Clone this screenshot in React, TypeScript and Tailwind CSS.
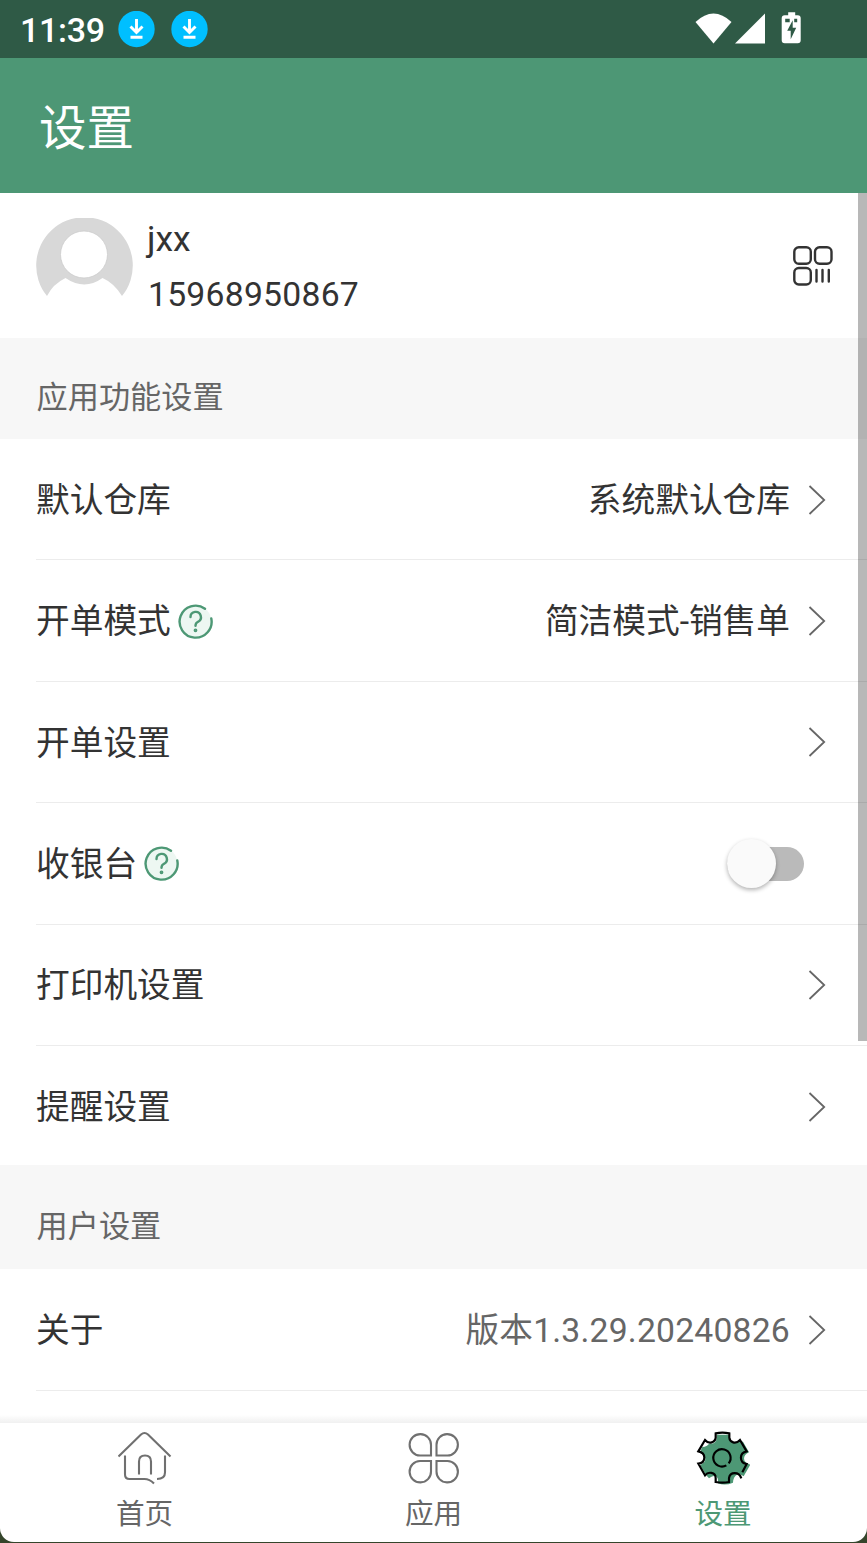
import type { ReactNode } from "react";

const settings = [
  { id: "warehouse", label: "默认仓库", value: "系统默认仓库" },
  { id: "mode", label: "开单模式", value: "简洁模式-销售单", help: true },
  { id: "billing", label: "开单设置" },
  { id: "cashier", label: "收银台", help: true, toggle: true },
  { id: "printer", label: "打印机设置" },
  { id: "reminder", label: "提醒设置" },
];

const DownloadBadge = () => (
  <svg width="37" height="37" viewBox="0 0 37 37" fill="none">
    <circle cx="18.5" cy="18" r="18.2" fill="#00bfff" />
    <path d="M18.5 8v13M12.5 15.5l6 6 6-6M12.5 26.3h12" stroke="white" strokeWidth="2.9" />
  </svg>
);

const StatusBar = () => (
  <div className="flex h-[58px] shrink-0 items-center bg-[#2f5a46] pl-5 text-white">
    <span className="w-[98px] pt-0.5 text-[34px] leading-none font-medium tracking-[-0.3px]">
      11:39
    </span>
    <div className="flex gap-4">
      <DownloadBadge />
      <DownloadBadge />
    </div>
    <svg className="mr-16 ml-auto" width="108" height="36" viewBox="0 0 108 36" fill="white">
      <path d="M0.500 11Q18.500-6 36.500 11L18.500 32.500Z" />
      <path d="M70 2.500v30H40Z" />
      <path
        fillRule="evenodd"
        d="M92.500 1h7v3h2.500q3 0 3 3v22q0 3-3 3H89q-3 0-3-3V7q0-3 3-3h3.500ZM89.500 7.500v3.500h4.500v-3.500ZM98.500 7.500v3.500h3v-3.500ZM97 9L91.500 19.500h3.500v8.500l5.500-11.500h-3.500Z"
        transform="translate(0.700 0.300)"
      />
    </svg>
  </div>
);

const Avatar = () => (
  <svg className="mt-px shrink-0" width="97" height="97" viewBox="0 0 97 97">
    <path
      d="M11 78A48.300 48.300 0 1 1 86 78Q78 65 66.500 60Q48.500 73 29.500 60Q17 66 11 78Z"
      fill="#d8d8d8"
    />
    <circle cx="48" cy="36.500" r="23.500" fill="white" stroke="#cccccc" strokeWidth="0.800" />
  </svg>
);

const QrIcon = () => (
  <svg width="40" height="40" viewBox="0 0 40 40" fill="none" stroke="#333333" strokeWidth="2.400">
    <rect x="1.300" y="1.300" width="16.500" height="16.500" rx="4.500" />
    <rect x="22" y="1.300" width="16.500" height="16.500" rx="4.500" />
    <rect x="1.300" y="22" width="16.500" height="16.500" rx="4.500" />
    <path d="M23.500 24v11.500M29.500 24v11.500M35.800 24v11.500" strokeLinecap="round" />
  </svg>
);

const HelpIcon = () => (
  <svg
    className="ml-[7px]"
    width="35"
    height="35"
    viewBox="0 0 35 35"
    fill="none"
    stroke="#4d9875"
    strokeWidth="2.400"
    strokeLinecap="round"
  >
    <circle cx="17.500" cy="17.500" r="16" fill="#edf7f2" stroke="none" />
    <path d="M27 4.700A16 16 0 1 0 33.300 14.500" />
    <path d="M12.500 13a5.200 5.200 0 1 1 7.400 4.800q-2.400 1.200-2.400 4" />
    <circle cx="17.500" cy="26.300" r="0.700" fill="#4d9875" />
  </svg>
);

const Chevron = () => (
  <svg className="ml-[18px]" width="18" height="32" viewBox="0 0 18 32" fill="none">
    <path d="M1.500 2L16.200 16L1.500 30" stroke="#666666" strokeWidth="1.800" />
  </svg>
);

const Toggle = () => (
  <div className="mr-[22px] flex h-[34px] w-[77px] items-center rounded-full bg-[#bababa]">
    <div className="h-[49px] w-[49px] shrink-0 rounded-full bg-[#fafafa] shadow-[0_2px_4px_rgba(0,0,0,0.3)]" />
  </div>
);

const SectionTitle = ({ children }: { children: ReactNode }) => (
  <div className="flex h-full items-center bg-[#f7f7f7] pt-5 pl-[36.500px] text-[31.200px] text-[#666666]">
    {children}
  </div>
);

const HomeIcon = () => (
  <svg width="54" height="54" viewBox="0 0 54 54" fill="none" stroke="#707070" strokeWidth="2.100">
    <path d="M0.500 25.500L23 3.500q3.500-3 7 0l22.500 22" />
    <path d="M7 24.500v19q0 4.500 4.500 4.500h15q5 0 9.500 4.500M47 24.500v17q0 6.500-8 6.500" />
    <path d="M21 43.500V30.500q0-6 6-6t6 6v13" />
  </svg>
);

const AppsIcon = () => (
  <svg width="54" height="54" viewBox="0 0 54 54" fill="none" stroke="#707070" strokeWidth="2.100">
    <path d="M24 24.500H13A10.700 10.700 0 1 1 24 14Z" />
    <path d="M29.500 24.500H40.500A10.700 10.700 0 1 0 29.500 14Z" />
    <path d="M24 30H13A10.700 10.700 0 1 0 24 40.500Z" />
    <path d="M29.500 30H40.500A10.700 10.700 0 1 1 29.500 40.500Z" />
  </svg>
);

const GearIcon = () => (
  <svg width="54" height="54" viewBox="76 64 162 162" fill="none">
    <path
      d="M138 75H176V84C178 98 195 104 207 93L217 96L235 128C214 137 215 160 239 165L219 200C205 190 189 193 187 219Q163 229 142 221V211C141 195 125 196 115 206L108 198L88 166C110 158 109 137 87 129L95 112Q110 110 115 102C127 104 138 98 138 84Z"
      fill="#4d9875"
    />
    <g stroke="#000000" strokeWidth="6.500">
      <path d="M215 188L228 163C205 158 205 130 228 125L208 91C195 105 177 98 176 84V71Q155 67 135 71V84C134 98 115 105 103 91L83 125C107 130 107 158 83 162L103 197C112 185 135 187 135 205V217Q155 221 175 217V205C178 186 205 185 212 206" />
      <path d="M167 167A26 26 0 1 1 174 161" />
    </g>
  </svg>
);

const tabs = [
  { label: "首页", icon: <HomeIcon />, active: false },
  { label: "应用", icon: <AppsIcon />, active: false },
  { label: "设置", icon: <GearIcon />, active: true },
];

export default function App() {
  return (
    <div className="bg-[#35452b] font-['Roboto','Noto_Sans_CJK_SC',sans-serif]">
      <div className="relative flex h-[1543px] w-[867px] flex-col overflow-hidden text-[#333333]">
        <StatusBar />
        <header className="flex h-[135px] shrink-0 items-center bg-[#4d9775] pt-2 pl-[39px] text-[47.500px] text-white">
          设置
        </header>

        <main className="relative h-[1230px] shrink-0 overflow-hidden bg-white text-[33.700px]">
          <div className="flex h-[145px] items-center pr-[34px] pl-9">
            <Avatar />
            <div className="ml-3.5 flex-1 pt-0.5 leading-[55px]">
              <div className="text-[35.500px]">jxx</div>
              <div className="pl-px tracking-[0.250px]">15968950867</div>
            </div>
            <QrIcon />
          </div>

          <div className="h-[101px]">
            <SectionTitle>应用功能设置</SectionTitle>
          </div>
          <div className="h-[726px] pl-9">
            {settings.map((item) => (
              <div
                key={item.id}
                className="flex h-[121.400px] items-center border-b border-[#ececec] pt-px pr-[41px] last:h-[119px] last:border-0 last:pt-[3px]"
              >
                <span className="pt-[3px]">{item.label}</span>
                {item.help && <HelpIcon />}
                <div className="ml-auto flex items-center">
                  {item.value && <span className="pt-[3px]">{item.value}</span>}
                  {item.toggle ? <Toggle /> : <Chevron />}
                </div>
              </div>
            ))}
          </div>

          <div className="h-[104px]">
            <SectionTitle>用户设置</SectionTitle>
          </div>
          <div className="pl-9">
            <div className="flex h-[121.500px] items-center border-b border-[#ececec] pt-px pr-[41px]">
              <span className="pt-[3px]">关于</span>
              <span className="ml-auto pt-[3px] tracking-[0.200px] text-[#666666]">
                版本1.3.29.20240826
              </span>
              <Chevron />
            </div>
          </div>

          {/* scroll indicator */}
          <div className="absolute top-0 right-0 h-[848px] w-[9px] bg-black/28" />
          <div className="absolute bottom-0 h-2 w-full bg-gradient-to-t from-black/6 to-transparent" />
        </main>

        <nav className="grid h-[119px] shrink-0 grid-cols-3 rounded-b-[14px] bg-white">
          {tabs.map((tab) => (
            <div key={tab.label} className="flex flex-col items-center pt-2">
              {tab.icon}
              <span
                className={
                  tab.active
                    ? "mt-2 pl-px text-[28.600px] leading-[42px] text-[#4d9875]"
                    : "mt-2 text-[28.600px] leading-[42px] text-[#666666]"
                }
              >
                {tab.label}
              </span>
            </div>
          ))}
        </nav>
      </div>
    </div>
  );
}
